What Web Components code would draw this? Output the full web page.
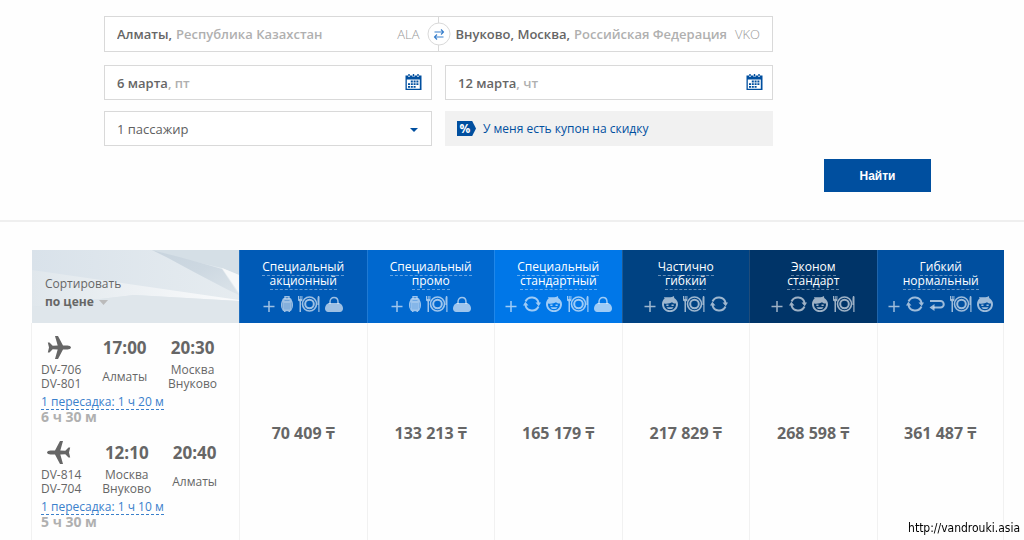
<!DOCTYPE html>
<html lang="ru">
<head>
<meta charset="utf-8">
<meta name="viewport" content="width=device-width, initial-scale=1">
<title>Поиск авиабилетов</title>
<style>
  body { margin: 0; background: #fefefe; color: #666; font: 13px/16px "Open Sans", "Noto Sans", sans-serif; }
</style>
</head>
<body>
<search-form></search-form>
<fare-table></fare-table>
<source-mark>http://vandrouki.asia</source-mark>

<script>
const define = (name, html, setup) => {
  const tpl = document.createElement('template');
  tpl.innerHTML = html;
  customElements.define(name, class extends HTMLElement {
    connectedCallback() {
      if (this.shadowRoot) return;
      const root = this.attachShadow({ mode: 'open' });
      root.append(tpl.content.cloneNode(true));
      if (setup) setup(this, root);
    }
  });
};

/* Service icons of the fare headers */
const ICONS = {
  plus: [13, '<path d="M6 5v11M0.500 10.500h11" fill="none" stroke="currentColor" stroke-width="1.500"/>'],
  suitcase: [12, '<path d="M4 2.500V.700h4v1.800" fill="none" stroke="currentColor" stroke-width="1.400"/><path d="M3.200 2h5.600c1.200 0 1.900 1 2 2.300C11.800 6 12 7.500 12 9s-.200 3-1.200 4.300c-.100 1.100-.800 1.900-1.800 1.900V16H7.500v-.800h-3V16H3v-.800c-1 0-1.700-.800-1.800-1.900C.200 12 0 10.500 0 9s.200-3 1.200-4.700C1.300 3 2 2 3.200 2z"/><path d="M3.500 4.500h5M1.700 6.500v6M4 7v6.500M6 7v6.500M8 7v6.500M10.300 6.500v6" stroke="var(--cell)" stroke-opacity=".4" stroke-width=".8" fill="none"/>'],
  plate: [22, '<path d="M0 0h1v3h.700V0h1v3h.700V0h1v4.500L3 5.500V16H1.500V5.500L0 4.500zM20 0c1 0 1.500.500 1.500 1v15H20.300V9H19.500V2z"/><circle cx="11.500" cy="8" r="7" fill="none" stroke="currentColor" stroke-width="1.600"/><circle cx="11.500" cy="8" r="4.300" fill="none" stroke="currentColor" stroke-width="2"/>'],
  bag: [18, '<path d="M5 8V6c0-2.800 1.700-4.500 4-4.500S13 3.200 13 6v2" fill="none" stroke="currentColor" stroke-width="1.500"/><path d="M3.500 7h11C17 8.500 18 10.500 18 12.500S16.500 16 15 16H3c-1.500 0-3-1.500-3-3.500S1 8.500 3.500 7z"/>'],
  refresh: [18, '<path d="M2.500 5.500A7 7 0 0 1 15.600 6.800M15.500 10.500A7 7 0 0 1 2.400 9.200" fill="none" stroke="currentColor" stroke-width="1.900"/><path d="M12.500 6.500H18L15.700 10.200zM0 9.500h5.500L2.300 5.800z"/>'],
  face: [16, '<path fill-rule="evenodd" d="M7 1.200C9 1.200 11 .900 12 0l.200 1.900C14.500 3.200 16 5.500 16 8.200 16 12.600 12.500 16 8 16S0 12.600 0 8.200C0 5.800 1 3.900 2.600 2.600L2 1c1.500.500 3 .300 5 .200zM2 7.500C1.700 11.500 4.300 14.200 8 14.200s6.300-2.700 6-6.700c-1.500.200-3-.300-4-1.200C8.500 7.500 5 8 2 7.500z"/><path d="M4.300 9.200h2.200M9.500 9.200h2.200" stroke="currentColor" stroke-width="1.500"/><path d="M4.500 11.200h7c-.700 2.500-6.300 2.500-7 0z"/>'],
  back: [16, '<path d="M1 5h10.500a3 3 0 0 1 0 6.500H4.500" fill="none" stroke="currentColor" stroke-width="2"/><path d="M5.500 8v7L.500 11.500z"/>']
};
define('service-icon', `
  <style>:host { display: block; height: 16px; } svg { display: block; fill: currentColor; overflow: visible; }</style>
  <svg height="16" aria-hidden="true"></svg>`,
  (host, root) => {
    const [w, art] = ICONS[host.getAttribute('name')];
    const svg = root.querySelector('svg');
    svg.setAttribute('width', w);
    svg.setAttribute('viewBox', `0 0 ${w} 16`);
    svg.innerHTML = art;
  });

/* City half of the route box */
define('city-field', `
  <style>
    :host { display: block; min-width: 0; }
    label { display: flex; align-items: center; height: 100%; white-space: pre; font-size: 13px; font-weight: 600; color: #b0b0b0; }
    input { field-sizing: content; min-width: 0; padding: 0; border: 0; outline: 0; background: none; font: inherit; color: #666; }
    .country { margin-left: 4px; flex: 1; }
    .code { font-weight: 300; color: #999; }
  </style>
  <label><input type="text"><span class="country"></span><span class="code"></span></label>`,
  (host, root) => {
    const input = root.querySelector('input');
    input.value = host.getAttribute('city');
    input.setAttribute('aria-label', host.getAttribute('label'));
    root.querySelector('.country').textContent = host.getAttribute('country');
    root.querySelector('.code').textContent = host.getAttribute('code');
  });

define('date-field', `
  <style>
    :host { display: flex; align-items: center; box-sizing: border-box; height: 35px; padding: 0 9px 0 12px; border: 1px solid #d9d9d9; background: #fff; }
    label { display: flex; flex: 1; font-size: 13px; font-weight: 600; color: #b0b0b0; white-space: pre; }
    input { field-sizing: content; padding: 0; border: 0; outline: 0; background: none; font: inherit; color: #666; }
    button { padding: 0 0 2px; border: 0; background: none; color: #004f9f; }
    svg { display: block; }
  </style>
  <label><input type="text"><span></span></label>
  <button type="button" aria-label="Открыть календарь">
    <svg width="17" height="16" viewBox="0 0 17 16" fill="currentColor"><path fill-rule="evenodd" d="M.5 1.500H3V3h2V1.500h2.500V3h2V1.500H12V3h2V1.500h2.500V16H.5zM1.800 5.500v9.200h13V5.500z"/><path d="M3.300 0h1.400v2.500H3.300zM7.800 0h1.400v2.500H7.800zM12.300 0h1.400v2.500h-1.400z"/><path d="M5.800 6.500h2v1.900h-2zM8.600 6.500h2v1.900h-2zM11.400 6.500h2v1.900h-2zM3 9.200h2v1.900H3zM5.800 9.200h2v1.900h-2zM8.600 9.200h2v1.900h-2zM11.400 9.200h2v1.900h-2zM3 11.900h2v1.900H3zM5.800 11.900h2v1.900h-2zM8.600 11.900h2v1.900h-2z"/></svg>
  </button>`,
  (host, root) => {
    const input = root.querySelector('input');
    input.value = host.getAttribute('date');
    input.setAttribute('aria-label', host.getAttribute('label'));
    root.querySelector('span').textContent = ', ' + host.getAttribute('day');
  });

define('search-form', `
  <style>
    :host { display: block; border-bottom: 2px solid #efefef; }
    form { padding: 16px 93px 28px 104px; }
    .fields { display: grid; grid-template-columns: 1fr 1fr; gap: 11px 13px; margin-right: 158px; }
    .route { grid-column: 1 / -1; position: relative; display: grid; grid-template-columns: 1fr 1fr; height: 34px; margin-bottom: 2px; border: 1px solid #d9d9d9; background: #fff; }
    .from { padding: 0 18px 0 12px; border-right: 1px solid #d9d9d9; }
    .to { padding: 0 12px 0 17px; }
    .swap { position: absolute; left: 50%; top: 50%; transform: translate(-50%, -50%); width: 23px; height: 23px; padding: 0; border: 1px solid #d9d9d9; border-radius: 50%; background: #fff; color: #3a80cc; display: grid; place-items: center; }
    .pax { position: relative; display: grid; }
    select { appearance: none; height: 35px; padding: 0 12px; border: 1px solid #d9d9d9; border-radius: 0; background: #fff; color: #606060; font: 500 13px/16px "Open Sans", "Noto Sans", sans-serif; }
    .pax svg { position: absolute; right: 14px; top: 17px; pointer-events: none; }
    .coupon { display: flex; align-items: center; gap: 7px; height: 35px; padding: 0 12px; border: 0; background: #f1f1f1; color: #004f9f; font: 500 12px/16px "Open Sans", "Noto Sans", sans-serif; }
    .tag { width: 19px; height: 15px; padding-right: 3px; box-sizing: border-box; background: #004f9f; color: #fff; font-weight: 700; line-height: 15px; clip-path: polygon(0 0, 80% 0, 100% 50%, 80% 100%, 0 100%); }
    .actions { display: flex; justify-content: flex-end; margin-top: 13px; }
    .find { width: 107px; height: 33px; border: 0; background: #004f9f; color: #fff; font: bold 12px/16px "Liberation Sans", Arial, sans-serif; }
  </style>
  <form>
    <div class="fields">
      <div class="route">
        <city-field class="from" label="Откуда" city="Алматы," country="Республика Казахстан" code="ALA"></city-field>
        <city-field class="to" label="Куда" city="Внуково, Москва," country="Российская Федерация" code="VKO"></city-field>
        <button class="swap" type="button" aria-label="Поменять местами">
          <svg width="11" height="12" viewBox="0 0 11 12" fill="none" stroke="currentColor" stroke-width="1.200"><path d="M1 3.500h9M7.500 1L10 3.500 7.500 6M10 8.500H1M3.500 6L1 8.500 3.500 11"/></svg>
        </button>
      </div>
      <date-field label="Дата вылета" date="6 марта" day="пт"></date-field>
      <date-field label="Дата возвращения" date="12 марта" day="чт"></date-field>
      <div class="pax">
        <select aria-label="Пассажиры"><option>1 пассажир</option></select>
        <svg width="8" height="4" viewBox="0 0 8 4" aria-hidden="true"><path d="M0 0h8L4 4z" fill="#004f9f"/></svg>
      </div>
      <button class="coupon" type="button"><span class="tag">%</span><span>У меня есть купон на скидку</span></button>
    </div>
    <div class="actions"><button class="find" type="button">Найти</button></div>
  </form>`);

define('fare-head', `
  <style>
    :host { display: block; text-align: center; color: #fff; font-size: 12px; line-height: 14px; }
    a { color: inherit; text-decoration: none; white-space: pre-line; border-bottom: 1px dashed rgba(255, 255, 255, .4); }
    .services { display: flex; justify-content: center; gap: 5px; margin-top: 8px; color: rgba(255, 255, 255, .62); }
  </style>
  <a href="#fare"></a>
  <div class="services"></div>`,
  (host, root) => {
    root.querySelector('a').textContent = host.getAttribute('name').replace('|', '\n');
    root.querySelector('.services').innerHTML = host.getAttribute('services').split(' ')
      .map(n => `<service-icon name="${n}"></service-icon>`).join('');
  });

define('flight-leg', `
  <style>
    :host { display: block; }
    .legs { display: flex; gap: 21px; }
    .stop { display: grid; grid-template-rows: 24px 28px; row-gap: 3px; justify-items: center; align-items: center; font-size: 12px; line-height: 14px; text-align: center; white-space: pre-line; }
    .time { font-size: 17px; font-weight: 700; line-height: 24px; }
    a { display: block; width: fit-content; margin-top: 3px; line-height: 15px; font-size: 12px; color: #3a80cc; text-decoration: none; border-bottom: 1px dashed #3a80cc; }
    .total { font-size: 14px; font-weight: 700; line-height: 14px; color: #b0b0b0; }
    svg { margin-left: 6px; justify-self: start; fill: #666; }
    :host([back]) svg { transform: scaleX(-1); }
  </style>
  <div class="legs">
    <div class="stop">
      <svg width="24" height="24" viewBox="0 0 24 24" aria-hidden="true"><path d="M24 11.500c0 1.300-2 2-3.500 2h-4.500L11 23H8l2.700-9.500-5-.300L2.500 16.500H.800L2 11.500.8 6.500h1.700l3.200 3.300 5-.300L8 0h3l5 9.500h4.500c1.500 0 3.500.700 3.500 2z"/></svg>
      <span class="codes"></span>
    </div>
    <div class="stop"><span class="time dep"></span><span class="from"></span></div>
    <div class="stop"><span class="time arr"></span><span class="to"></span></div>
  </div>
  <a href="#stop"></a>
  <div class="total"></div>`,
  (host, root) => {
    const put = (sel, attr) => root.querySelector(sel).textContent = host.getAttribute(attr).replace('|', '\n');
    put('.codes', 'codes'); put('.dep', 'dep'); put('.arr', 'arr');
    put('.from', 'from'); put('.to', 'to'); put('a', 'stop'); put('.total', 'total');
  });

define('sort-head', `
  <style>
    :host { display: grid; height: 73px; line-height: 18px; font-weight: 400; text-align: left; }
    svg.art, .text { grid-area: 1 / 1; }
    .art { width: 100%; height: 73px; display: block; }
    .text { position: relative; padding: 25px 13px 0; }
    button { display: flex; align-items: center; gap: 5px; padding: 0; border: 0; background: none; color: #666; font: 700 12px/18px "Open Sans", "Noto Sans", sans-serif; }
    .label { font-size: 12px; }
  </style>
  <svg class="art" viewBox="0 0 207 73" preserveAspectRatio="none" aria-hidden="true">
    <defs>
      <linearGradient id="base" x1="0" y1="0" x2="1" y2="0"><stop offset="0" stop-color="#d9e2ea"/><stop offset="1" stop-color="#e6ecf0"/></linearGradient>
      <linearGradient id="beam" x1="0" y1="0" x2="1" y2="0"><stop offset="0" stop-color="#e0e7ec"/><stop offset="1" stop-color="#fafbfc"/></linearGradient>
      <linearGradient id="wing" x1="0" y1="0" x2="1" y2="1"><stop offset="0" stop-color="#c8d4de"/><stop offset=".5" stop-color="#cdd8e1"/><stop offset="1" stop-color="#dce4ea"/></linearGradient>
    </defs>
    <path d="M0 0h207v73H0z" fill="url(#base)"/>
    <path d="M0 20l207 30v1l-105-6L0 57z" fill="url(#beam)"/>
    <path d="M0 57l102-12 105 6v22H0z" fill="#dfe6eb"/>
    <path d="M120 0h87v25l-17-7-35-8z" fill="#d5dfe6"/>
    <path d="M120 0c24 6 46 12 70 19l17 26c-30-14-60-32-87-45z" fill="url(#wing)"/>
    <path d="M190 18l17 7v18z" fill="#f6f8f9"/>
  </svg>
  <div class="text">
    <div class="label">Сортировать</div>
    <button type="button">по цене
      <svg width="9" height="5" viewBox="0 0 9 5" aria-hidden="true"><path d="M0 0h9L4.500 5z" fill="#bbb"/></svg>
    </button>
  </div>`);

define('fare-table', `
  <style>
    :host { display: block; padding: 28px 20px 0 31px; }
    table { width: 100%; table-layout: fixed; border-collapse: separate; border-spacing: 0; }
    .first { width: 208px; }
    th, td { box-sizing: border-box; padding: 0; border-left: 1px solid #f1f1f1; }
    th { height: 73px; font-weight: 400; vertical-align: top; background: var(--cell); border-left-color: rgba(255, 255, 255, .12); }
    td:last-child { border-right: 1px solid #f1f1f1; }
    td { text-align: center; vertical-align: middle; font-size: 16px; font-weight: 700; }
    td.flights { padding: 13px 0 13px 9px; text-align: left; font-weight: 400; }
    fare-head { padding-top: 10px; }
    flight-leg + flight-leg { margin-top: 17px; }
  </style>
  <table>
    <colgroup><col class="first"><col span="6"></colgroup>
    <thead><tr>
      <th scope="col"><sort-head></sort-head></th>
      <th scope="col" style="--cell:#005ab6"><fare-head services="plus suitcase plate bag" name="Специальный|акционный"></fare-head></th>
      <th scope="col" style="--cell:#0068cf"><fare-head services="plus suitcase plate bag" name="Специальный|промо"></fare-head></th>
      <th scope="col" style="--cell:#0077e8"><fare-head services="plus refresh face plate bag" name="Специальный|стандартный"></fare-head></th>
      <th scope="col" style="--cell:#004282"><fare-head services="plus face plate refresh" name="Частично|гибкий"></fare-head></th>
      <th scope="col" style="--cell:#003468"><fare-head services="plus refresh face plate" name="Эконом|стандарт"></fare-head></th>
      <th scope="col" style="--cell:#004f9f"><fare-head services="plus refresh back plate face" name="Гибкий|нормальный"></fare-head></th>
    </tr></thead>
    <tbody><tr>
      <td class="flights">
        <flight-leg codes="DV-706|DV-801" dep="17:00" from="Алматы" arr="20:30" to="Москва|Внуково" stop="1 пересадка: 1 ч 20 м" total="6 ч 30 м"></flight-leg>
        <flight-leg back codes="DV-814|DV-704" dep="12:10" from="Москва|Внуково" arr="20:40" to="Алматы" stop="1 пересадка: 1 ч 10 м" total="5 ч 30 м"></flight-leg>
      </td>
      <td>70 409 ₸</td><td>133 213 ₸</td><td>165 179 ₸</td><td>217 829 ₸</td><td>268 598 ₸</td><td>361 487 ₸</td>
    </tr></tbody>
  </table>`);

define('source-mark', `
  <style>:host { position: fixed; right: 4px; bottom: 4px; color: #000; font: 12px/16px "DejaVu Sans Condensed", "DejaVu Sans", sans-serif; }</style>
  <slot></slot>`);
</script>
</body>
</html>
